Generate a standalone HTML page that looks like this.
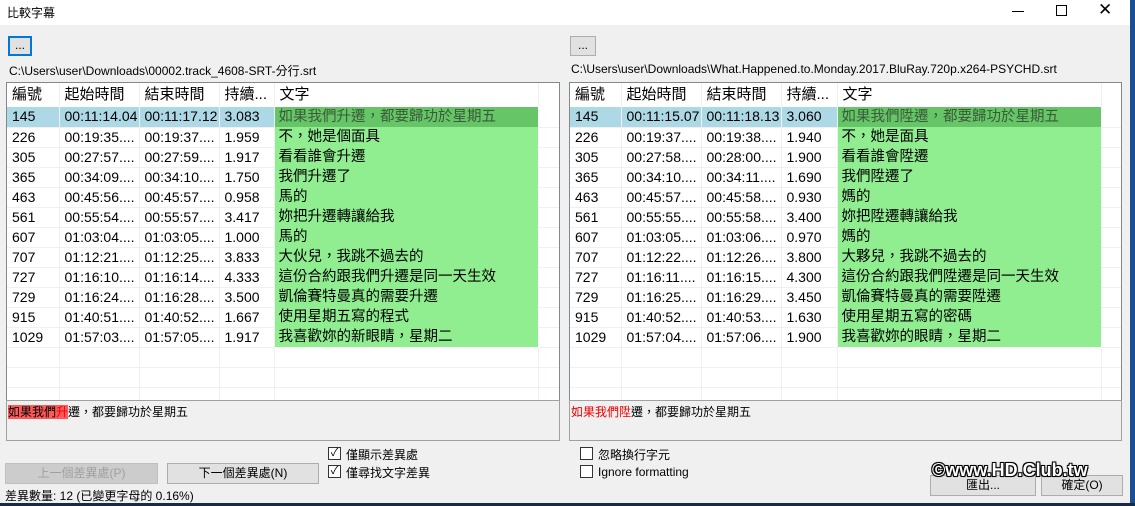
<!DOCTYPE html>
<html><head><meta charset="utf-8"><style>
*{box-sizing:border-box;margin:0;padding:0}
body{width:1135px;height:506px;overflow:hidden;background:#f0f0f0;font-family:"Liberation Sans","Noto Sans CJK TC",sans-serif;position:relative;font-size:12px;color:#000}
.abs{position:absolute}
#title{left:0;top:0;width:1130px;height:25px;background:#fff}
#desk{left:1130px;top:0;width:5px;height:506px;background:#1b4f93}
.btn{position:absolute;background:#e1e1e1;border:1px solid #adadad;text-align:center;font-size:12px;line-height:19px}
.list{position:absolute;background:#fff;border:1px solid #828790;overflow:hidden}
table{border-collapse:collapse;table-layout:fixed}
td{height:20px;line-height:19px;border-right:1px solid #f0f0f0;border-bottom:1px solid #f0f0f0;padding:0 0 0 5px;white-space:nowrap;overflow:hidden;font-size:14px}
tr.h td{height:24px;line-height:22px;font-size:15px;border-bottom:none}
td.t{background:#90ee90;font-size:14.5px;padding-left:4px;border-bottom:none;border-right:none}
tr.s td{background:#add8e6}
tr.s td.t{background:#66c566;color:#3a5a3a}
.box{position:absolute;background:#f0f0f0;border:1px solid #a0a0a0;font-size:12px;padding:2px 1px}
.cb{position:absolute;width:13px;height:13px;border:1px solid #333;background:#fff;font-size:11px;line-height:11px;text-align:center}
.lbl{position:absolute;font-size:12px}
</style></head><body>
<div id="title" class="abs"></div>
<div class="abs" style="left:7px;top:4px;font-size:12px">比較字幕</div>
<div class="abs" style="left:1012px;top:11px;width:12px;height:1px;background:#000"></div>
<div class="abs" style="left:1056px;top:5px;width:11px;height:11px;border:1px solid #000"></div>
<div class="abs" style="left:1098px;top:1px;font-size:17px;line-height:18px">✕</div>
<div id="desk" class="abs"></div>

<div class="btn" style="left:8px;top:36px;width:24px;height:20px;border:2px solid #0078d7;line-height:15px">...</div>
<div class="btn" style="left:570px;top:36px;width:26px;height:20px;line-height:17px">...</div>
<div class="abs" style="left:9px;top:62px">C:\Users\user\Downloads\00002.track_4608-SRT-分行.srt</div>
<div class="abs" style="left:571px;top:62px">C:\Users\user\Downloads\What.Happened.to.Monday.2017.BluRay.720p.x264-PSYCHD.srt</div>

<div class="list" style="left:6px;top:82px;width:554px;height:319px">
<table style="width:553px">
<colgroup><col style="width:52px"><col style="width:80px"><col style="width:80px"><col style="width:55px"><col style="width:264px"><col></colgroup>
<tr class="h"><td>編號</td><td>起始時間</td><td>結束時間</td><td>持續...</td><td>文字</td><td></td></tr>
<tr class="s"><td>145</td><td>00:11:14.04</td><td>00:11:17.12</td><td>3.083</td><td class="t">如果我們升遷，都要歸功於星期五</td><td style="background:#fff"></td></tr>
<tr><td>226</td><td>00:19:35....</td><td>00:19:37....</td><td>1.959</td><td class="t">不，她是個面具</td><td></td></tr>
<tr><td>305</td><td>00:27:57....</td><td>00:27:59....</td><td>1.917</td><td class="t">看看誰會升遷</td><td></td></tr>
<tr><td>365</td><td>00:34:09....</td><td>00:34:10....</td><td>1.750</td><td class="t">我們升遷了</td><td></td></tr>
<tr><td>463</td><td>00:45:56....</td><td>00:45:57....</td><td>0.958</td><td class="t">馬的</td><td></td></tr>
<tr><td>561</td><td>00:55:54....</td><td>00:55:57....</td><td>3.417</td><td class="t">妳把升遷轉讓給我</td><td></td></tr>
<tr><td>607</td><td>01:03:04....</td><td>01:03:05....</td><td>1.000</td><td class="t">馬的</td><td></td></tr>
<tr><td>707</td><td>01:12:21....</td><td>01:12:25....</td><td>3.833</td><td class="t">大伙兒，我跳不過去的</td><td></td></tr>
<tr><td>727</td><td>01:16:10....</td><td>01:16:14....</td><td>4.333</td><td class="t">這份合約跟我們升遷是同一天生效</td><td></td></tr>
<tr><td>729</td><td>01:16:24....</td><td>01:16:28....</td><td>3.500</td><td class="t">凱倫賽特曼真的需要升遷</td><td></td></tr>
<tr><td>915</td><td>01:40:51....</td><td>01:40:52....</td><td>1.667</td><td class="t">使用星期五寫的程式</td><td></td></tr>
<tr><td>1029</td><td>01:57:03....</td><td>01:57:05....</td><td>1.917</td><td class="t">我喜歡妳的新眼睛，星期二</td><td></td></tr>
<tr><td></td><td></td><td></td><td></td><td></td><td></td></tr>
<tr><td></td><td></td><td></td><td></td><td></td><td></td></tr>
<tr><td></td><td></td><td></td><td></td><td></td><td></td></tr>
</table></div>

<div class="list" style="left:569px;top:82px;width:553px;height:319px">
<table style="width:552px">
<colgroup><col style="width:51px"><col style="width:80px"><col style="width:80px"><col style="width:56px"><col style="width:264px"><col></colgroup>
<tr class="h"><td>編號</td><td>起始時間</td><td>結束時間</td><td>持續...</td><td>文字</td><td></td></tr>
<tr class="s"><td>145</td><td>00:11:15.07</td><td>00:11:18.13</td><td>3.060</td><td class="t">如果我們陞遷，都要歸功於星期五</td><td style="background:#fff"></td></tr>
<tr><td>226</td><td>00:19:37....</td><td>00:19:38....</td><td>1.940</td><td class="t">不，她是面具</td><td></td></tr>
<tr><td>305</td><td>00:27:58....</td><td>00:28:00....</td><td>1.900</td><td class="t">看看誰會陞遷</td><td></td></tr>
<tr><td>365</td><td>00:34:10....</td><td>00:34:11....</td><td>1.690</td><td class="t">我們陞遷了</td><td></td></tr>
<tr><td>463</td><td>00:45:57....</td><td>00:45:58....</td><td>0.930</td><td class="t">媽的</td><td></td></tr>
<tr><td>561</td><td>00:55:55....</td><td>00:55:58....</td><td>3.400</td><td class="t">妳把陞遷轉讓給我</td><td></td></tr>
<tr><td>607</td><td>01:03:05....</td><td>01:03:06....</td><td>0.970</td><td class="t">媽的</td><td></td></tr>
<tr><td>707</td><td>01:12:22....</td><td>01:12:26....</td><td>3.800</td><td class="t">大夥兒，我跳不過去的</td><td></td></tr>
<tr><td>727</td><td>01:16:11....</td><td>01:16:15....</td><td>4.300</td><td class="t">這份合約跟我們陞遷是同一天生效</td><td></td></tr>
<tr><td>729</td><td>01:16:25....</td><td>01:16:29....</td><td>3.450</td><td class="t">凱倫賽特曼真的需要陞遷</td><td></td></tr>
<tr><td>915</td><td>01:40:52....</td><td>01:40:53....</td><td>1.630</td><td class="t">使用星期五寫的密碼</td><td></td></tr>
<tr><td>1029</td><td>01:57:04....</td><td>01:57:06....</td><td>1.900</td><td class="t">我喜歡妳的眼睛，星期二</td><td></td></tr>
<tr><td></td><td></td><td></td><td></td><td></td><td></td></tr>
<tr><td></td><td></td><td></td><td></td><td></td><td></td></tr>
<tr><td></td><td></td><td></td><td></td><td></td><td></td></tr>
</table></div>

<div class="box" style="left:6px;top:400px;width:554px;height:41px"><span style="background:#ff5a5a">如果我們<span style="color:#e00">升</span></span>遷，都要歸功於星期五</div>
<div class="box" style="left:569px;top:400px;width:553px;height:41px"><span style="color:#e00">如果我們陞</span>遷，都要歸功於星期五</div>

<div class="cb" style="left:328px;top:447px">✓</div><div class="lbl" style="left:346px;top:446px">僅顯示差異處</div>
<div class="cb" style="left:328px;top:465px">✓</div><div class="lbl" style="left:346px;top:464px">僅尋找文字差異</div>
<div class="cb" style="left:580px;top:447px"></div><div class="lbl" style="left:598px;top:446px">忽略換行字元</div>
<div class="cb" style="left:580px;top:465px"></div><div class="lbl" style="left:598px;top:465px">Ignore formatting</div>

<div class="btn" style="left:5px;top:463px;width:153px;height:21px;background:#cccccc;border-color:#bfbfbf;color:#a0a0a0">上一個差異處(P)</div>
<div class="btn" style="left:167px;top:463px;width:152px;height:21px">下一個差異處(N)</div>
<div class="abs" style="left:5px;top:487px">差異數量: 12 (已變更字母的 0.16%)</div>

<div class="btn" style="left:930px;top:475px;width:106px;height:21px">匯出...</div>
<div class="btn" style="left:1041px;top:475px;width:82px;height:21px">確定(O)</div>
<div class="abs" style="left:932px;top:460px;font-size:18px;font-weight:bold;color:#fff;text-shadow:-1px -1px 0 #000,1px -1px 0 #000,-1px 1px 0 #000,1px 1px 0 #000,0 0 2px #000">©www.HD.Club.tw</div>
<div class="abs" style="left:0;top:503px;width:1135px;height:3px;background:#1b2a44"></div>
</body></html>
